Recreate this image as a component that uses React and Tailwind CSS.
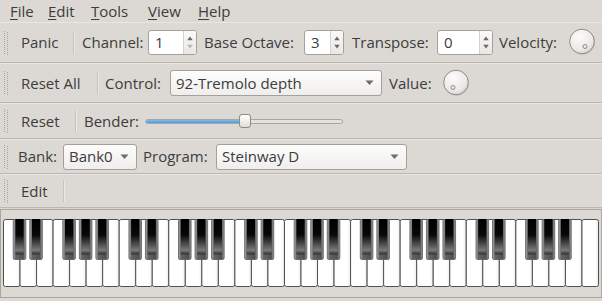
import React from 'react';

const TEXT = 'text-[#3c3c3c]';

function Handle() {
  const dots = [];
  for (let i = 0; i < 12; i++) {
    dots.push(<rect key={'a' + i} x="0" y={i * 2} width="1" height="1" fill="#aaa59e" />);
    dots.push(<rect key={'b' + i} x="3" y={i * 2 + 1} width="1" height="1" fill="#aaa59e" />);
  }
  return (
    <svg width="4" height="24" className="shrink-0 ml-[4px]">
      {dots}
    </svg>
  );
}

function Sep({ className }) {
  return (
    <div className={'flex shrink-0 h-[22px] ' + className}>
      <div className="w-px h-full bg-[#c7c3bc]" />
      <div className="w-px h-full bg-[#ebe8e4]" />
    </div>
  );
}

function Arrows({ downDisabled }) {
  return (
    <svg width="13" height="23" viewBox="0 0 13 23">
      <path d="M3.5 9 L6.5 5 L9.5 9 Z" fill="#6c6863" />
      <path d="M3.5 14 L6.5 18 L9.5 14 Z" fill={downDisabled ? '#b9b5b0' : '#6c6863'} />
    </svg>
  );
}

function SpinBox({ value, className, downDisabled }) {
  return (
    <div className={'flex shrink-0 h-[25px] rounded-[3px] border border-[#a5a099] bg-white overflow-hidden ' + className}>
      <div className="flex-1 flex items-center pl-[6px] leading-none">{value}</div>
      <div className="w-[13px] border-l border-[#d6d3ce] bg-gradient-to-b from-[#fafaf9] to-[#e9e7e4] flex items-center justify-center">
        <Arrows downDisabled={downDisabled} />
      </div>
    </div>
  );
}

function Combo({ value, className }) {
  return (
    <div className={'flex shrink-0 h-[26px] items-center rounded-[3px] border border-[#a5a099] bg-gradient-to-b from-[#fdfdfc] to-[#efeeec] ' + className}>
      <div className="flex-1 pl-[5px] leading-none">{value}</div>
      <svg width="9" height="6" className="mr-[7px]">
        <path d="M0.5 0.5 L8.5 0.5 L4.5 5 Z" fill="#6f6b66" />
      </svg>
    </div>
  );
}

function Knob({ className, dx }) {
  return (
    <svg width="28" height="29" viewBox="0 0 28 29" className={'shrink-0 ' + className}>
      <defs>
        <radialGradient id={'kg' + dx} cx="40%" cy="30%" r="75%">
          <stop offset="0%" stopColor="#fbfbfa" />
          <stop offset="70%" stopColor="#eceae7" />
          <stop offset="100%" stopColor="#d4d1cc" />
        </radialGradient>
      </defs>
      <circle cx="13.5" cy="14.2" r="12.6" fill="#c9c5bf" />
      <circle cx="13" cy="13.5" r="12.3" fill={'url(#kg' + dx + ')'} stroke="#8f8b85" strokeWidth="1" />
      <circle cx={13 + dx} cy="18.5" r="2" fill="none" stroke="#8b8781" strokeWidth="1" />
    </svg>
  );
}

function Keyboard() {
  const W = 595 / 36;
  const whites = [];
  for (let i = 0; i < 36; i++) {
    whites.push(
      <rect key={'w' + i} x={1.5 + i * W} y="0.5" width={W} height="67" rx="2" fill="url(#wg)" stroke="#505050" strokeWidth="1" />
    );
  }
  const blackOffsets = [1, 2, 4, 5, 6];
  const blacks = [];
  for (let o = 0; o < 5; o++) {
    for (const b of blackOffsets) {
      const boundary = 1.5 + (o * 7 + b) * W;
      const x = boundary - 6.8;
      blacks.push(
        <g key={'b' + o + '-' + b}>
          <rect x={x} y="0" width="12.6" height="40.5" rx="1.5" fill="url(#bo)" stroke="#5a5a5a" strokeWidth="0.8" />
          <rect x={x + 2.2} y="0" width="8.2" height="35.5" fill="url(#bi)" />
        </g>
      );
    }
  }
  return (
    <svg width="600" height="70" viewBox="0 0 600 70" className="block">
      <defs>
        <linearGradient id="wg" x1="0" y1="0" x2="1" y2="0">
          <stop offset="0%" stopColor="#ffffff" />
          <stop offset="80%" stopColor="#ffffff" />
          <stop offset="100%" stopColor="#ecebeb" />
        </linearGradient>
        <linearGradient id="bo" x1="0" y1="0" x2="1" y2="0">
          <stop offset="0%" stopColor="#b0b0b0" />
          <stop offset="20%" stopColor="#646464" />
          <stop offset="80%" stopColor="#505050" />
          <stop offset="100%" stopColor="#a0a0a0" />
        </linearGradient>
        <linearGradient id="bi" x1="0" y1="0" x2="0" y2="1">
          <stop offset="0%" stopColor="#000000" />
          <stop offset="45%" stopColor="#080808" />
          <stop offset="88%" stopColor="#7a7a7a" />
          <stop offset="100%" stopColor="#2e2e2e" />
        </linearGradient>
      </defs>
      {whites}
      {blacks}
    </svg>
  );
}

export default function App() {
  return (
    <div
      className={'w-[602px] h-[301px] overflow-hidden bg-[#dcd9d4] text-[15px] ' + TEXT}
      style={{ fontFamily: '"Open Sans", "Noto Sans", sans-serif' }}
    >
      {/* Menu bar */}
      <div className="h-[22px] flex items-center leading-none pt-[1px]">
        <span className="ml-[10px] w-[38px]"><span className="underline underline-offset-[2px]">F</span>ile</span>
        <span className="w-[43px]"><span className="underline underline-offset-[2px]">E</span>dit</span>
        <span className="w-[57px]"><span className="underline underline-offset-[2px]">T</span>ools</span>
        <span className="w-[50px]"><span className="underline underline-offset-[2px]">V</span>iew</span>
        <span><span className="underline underline-offset-[2px]">H</span>elp</span>
      </div>

      {/* Toolbar 1 */}
      <div className="h-[41px] flex items-center border-t border-t-[#e9e6e2] border-b border-b-[#bcb8b1] whitespace-nowrap">
        <Handle />
        <span className="ml-[13px] w-[38px]">Panic</span>
        <Sep className="ml-[14px]" />
        <span className="ml-[7px] w-[61px]">Channel:</span>
        <SpinBox value="1" className="ml-[5px] w-[49px]" downDisabled />
        <span className="ml-[7px] w-[93px]">Base Octave:</span>
        <SpinBox value="3" className="ml-[7px] w-[40px]" />
        <span className="ml-[8px] w-[79px]">Transpose:</span>
        <SpinBox value="0" className="ml-[6px] w-[56px]" />
        <span className="ml-[6px] w-[61px]">Velocity:</span>
        <Knob className="ml-[9px]" dx={3} />
      </div>

      {/* Toolbar 2 */}
      <div className="h-[40px] flex items-center border-t border-t-[#e9e6e2] border-b border-b-[#bcb8b1] whitespace-nowrap">
        <Handle />
        <span className="ml-[13px] w-[63px]">Reset All</span>
        <Sep className="ml-[13px]" />
        <span className="ml-[6px] w-[58px]">Control:</span>
        <Combo value="92-Tremolo depth" className="ml-[7px] w-[212px]" />
        <span className="ml-[7px] w-[44px]">Value:</span>
        <Knob className="ml-[10px]" dx={-3} />
      </div>

      {/* Toolbar 3 */}
      <div className="h-[36px] flex items-center border-t border-t-[#e9e6e2] border-b border-b-[#bcb8b1] whitespace-nowrap">
        <Handle />
        <span className="ml-[13px] w-[41px]">Reset</span>
        <Sep className="ml-[13px]" />
        <span className="ml-[7px] w-[55px]">Bender:</span>
        <div className="ml-[6px] w-[198px] h-[14px] relative flex items-center">
          <div className="w-full h-[5px] rounded-[3px] border border-[#a9a59f] bg-[#e3e1de] overflow-hidden">
            <div className="w-[96px] h-full bg-gradient-to-b from-[#7cbcf0] to-[#4a9ee0]" />
          </div>
          <div className="absolute left-[94px] top-0 w-[12px] h-[14px] rounded-[3px] border border-[#8e8a84] bg-gradient-to-b from-[#ffffff] to-[#dedcd8]" />
        </div>
      </div>

      {/* Toolbar 4 */}
      <div className="h-[35px] flex items-center border-t border-t-[#e9e6e2] border-b border-b-[#bcb8b1] whitespace-nowrap">
        <Handle />
        <span className="ml-[10px] w-[39px]">Bank:</span>
        <Combo value="Bank0" className="ml-[6px] w-[74px]" />
        <span className="ml-[6px] w-[66px]">Program:</span>
        <Combo value="Steinway D" className="ml-[7px] w-[191px]" />
      </div>

      {/* Toolbar 5 */}
      <div className="h-[34px] flex items-center border-t border-t-[#e9e6e2] border-b border-b-[#bcb8b1] whitespace-nowrap">
        <Handle />
        <span className="ml-[13px] w-[30px]">Edit</span>
        <Sep className="ml-[12px]" />
      </div>

      {/* Keyboard */}
      <div className="h-[93px] pt-[1px]">
        <div className="h-[89px] border border-[#aaa59e] pt-[9px] pl-[1px]">
          <Keyboard />
        </div>
      </div>
    </div>
  );
}
